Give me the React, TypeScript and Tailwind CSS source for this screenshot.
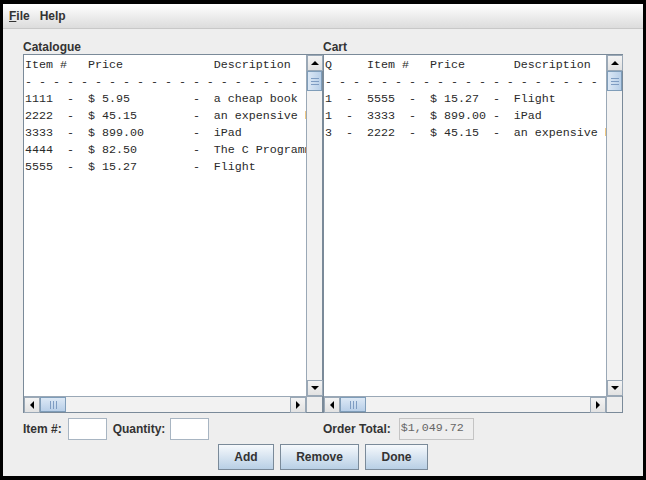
import React from 'react';

const mono = { fontFamily: '"Liberation Mono", "DejaVu Sans Mono", monospace' };
const sans = { fontFamily: '"Liberation Sans", Arial, sans-serif' };

const dashes = Array.from({ length: 30 }, () => '-').join(' ');

const catalogueLines = [
  'Item #   Price             Description',
  dashes,
  '1111  -  $ 5.95         -  a cheap book',
  '2222  -  $ 45.15        -  an expensive book',
  '3333  -  $ 899.00       -  iPad',
  '4444  -  $ 82.50        -  The C Programming Language',
  '5555  -  $ 15.27        -  Flight',
];

const cartLines = [
  'Q     Item #   Price       Description',
  dashes,
  '1  -  5555  -  $ 15.27  -  Flight',
  '1  -  3333  -  $ 899.00 -  iPad',
  '3  -  2222  -  $ 45.15  -  an expensive book',
];

function Arrow({ dir }: { dir: 'up' | 'down' | 'left' | 'right' }) {
  const pts = {
    up: '0,4 4,0 8,4',
    down: '0,0 8,0 4,4',
    left: '4,0 4,8 0,4',
    right: '0,0 0,8 4,4',
  }[dir];
  const vertical = dir === 'up' || dir === 'down';
  return (
    <svg width={vertical ? 8 : 4} height={vertical ? 4 : 8} viewBox={vertical ? '0 0 8 4' : '0 0 4 8'}>
      <polygon points={pts} fill="#000" />
    </svg>
  );
}

function ScrollButton({ dir }: { dir: 'up' | 'down' | 'left' | 'right' }) {
  return (
    <div className="w-[16px] h-[16px] shrink-0 flex items-center justify-center bg-gradient-to-b from-[#f4f4f4] to-[#e2e2e2] border border-[#9aa8b6]">
      <Arrow dir={dir} />
    </div>
  );
}

function VScrollBar() {
  return (
    <div className="w-[16px] h-full flex flex-col bg-[#f2f2f2] border-l border-[#9aa8b6]">
      <ScrollButton dir="up" />
      <div className="h-[20px] shrink-0 bg-gradient-to-r from-[#dce8f5] to-[#b8cfe8] border border-[#7f9db9] flex flex-col items-center justify-center gap-[2px]">
        <div className="w-[8px] h-[1px] bg-[#7e9cc2]" />
        <div className="w-[8px] h-[1px] bg-[#7e9cc2]" />
        <div className="w-[8px] h-[1px] bg-[#7e9cc2]" />
      </div>
      <div className="flex-1" />
      <ScrollButton dir="down" />
    </div>
  );
}

function HScrollBar() {
  return (
    <div className="h-[16px] flex bg-[#f2f2f2] border-t border-[#9aa8b6]">
      <ScrollButton dir="left" />
      <div className="w-[26px] shrink-0 bg-gradient-to-b from-[#dce8f5] to-[#b8cfe8] border border-[#7f9db9] flex items-center justify-center gap-[2px]">
        <div className="w-[1px] h-[8px] bg-[#7e9cc2]" />
        <div className="w-[1px] h-[8px] bg-[#7e9cc2]" />
        <div className="w-[1px] h-[8px] bg-[#7e9cc2]" />
      </div>
      <div className="flex-1" />
      <ScrollButton dir="right" />
      <div className="w-[16px] shrink-0 bg-[#eeeeee] border-l border-[#9aa8b6]" />
    </div>
  );
}

function ListPane({ title, lines }: { title: string; lines: string[] }) {
  return (
    <div className="w-[300px] flex flex-col">
      <div className="h-[25px] flex items-end text-[12px] leading-[14px] font-bold text-[#333333]" style={sans}>
        {title}
      </div>
      <div className="h-[359px] border border-[#7a8a99] bg-white flex flex-col">
        <div className="flex flex-1 min-h-0">
          <div className="flex-1 overflow-hidden pt-[2px] pl-[1px] text-[11.67px] leading-[17px] text-[#2a2a2a] whitespace-pre" style={mono}>
            {lines.map((l, i) => (
              <div key={i}>{l}</div>
            ))}
          </div>
          <VScrollBar />
        </div>
        <HScrollBar />
      </div>
    </div>
  );
}

function Button({ label, width }: { label: string; width: string }) {
  return (
    <button
      className={`${width} h-[26px] border border-[#7a8a99] bg-gradient-to-b from-[#f6f9fc] to-[#b8cfe5] text-[12px] font-bold text-[#333333]`}
      style={sans}
    >
      {label}
    </button>
  );
}

export default function App() {
  return (
    <div className="w-[646px] h-[480px] bg-black pt-[4px] pl-[3px] pr-[3px] pb-[4px]">
      <div className="h-full bg-[#eeeeee] flex flex-col">
        <div className="h-[25px] shrink-0 flex items-center gap-[10px] pl-[6px] bg-gradient-to-b from-white to-[#dcdcdc] border-b border-[#c8c8c8] text-[12px] font-bold text-[#333333]" style={sans}>
          <span>
            <span className="underline">F</span>ile
          </span>
          <span>Help</span>
        </div>
        <div className="flex pl-[20px]">
          <ListPane title="Catalogue" lines={catalogueLines} />
          <ListPane title="Cart" lines={cartLines} />
        </div>
        <div className="flex pl-[20px] mt-[5px] text-[12px] font-bold text-[#333333]" style={sans}>
          <div className="w-[300px] flex items-center">
            <span>Item #:</span>
            <div className="ml-[6px] w-[39px] h-[22px] bg-white border border-[#a8b5c2]" />
            <span className="ml-[6px]">Quantity:</span>
            <div className="ml-[5px] w-[39px] h-[22px] bg-white border border-[#a8b5c2]" />
          </div>
          <div className="w-[300px] flex items-center">
            <span>Order Total:</span>
            <div className="ml-[8px] w-[75px] h-[22px] bg-[#eeeeee] border border-[#c4c4c4] flex items-center pl-[1px] text-[11.67px] font-normal text-[#666666]" style={mono}>
              $1,049.72
            </div>
          </div>
        </div>
        <div className="flex justify-center gap-[6px] mt-[4px]">
          <Button label="Add" width="w-[56px]" />
          <Button label="Remove" width="w-[79px]" />
          <Button label="Done" width="w-[63px]" />
        </div>
      </div>
    </div>
  );
}
